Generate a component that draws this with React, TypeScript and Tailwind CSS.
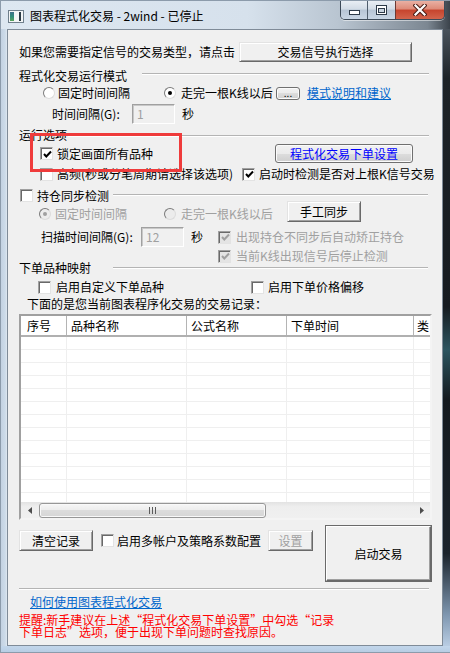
import React from "react";

type CProps = { checked?: boolean; disabled?: boolean; className?: string };

function Check({ checked = false, disabled = false, className = "" }: CProps) {
  return (
    <span
      className={`relative flex items-center justify-center w-[13px] h-[13px] shrink-0 border border-t-[#a0a0a0] border-l-[#a0a0a0] border-b-[#e3e3e3] border-r-[#e3e3e3] shadow-[inset_1px_1px_0_#696969] ${
        disabled ? "bg-[#e4e4e4]" : "bg-white"
      } ${className}`}
    >
      {checked && (
        <svg width="9" height="9" viewBox="0 0 9 9" className="ml-px mt-px">
          <polyline
            points="1,4 3.3,6.5 8,1.5"
            fill="none"
            stroke={disabled ? "#a0a0a0" : "#000"}
            strokeWidth="2"
          />
        </svg>
      )}
    </span>
  );
}

function Radio({ checked = false, disabled = false, className = "" }: CProps) {
  return (
    <span
      className={`flex items-center justify-center w-[12px] h-[12px] shrink-0 rounded-full border border-t-[#7a7a7a] border-l-[#7a7a7a] border-b-[#dcdcdc] border-r-[#dcdcdc] ${
        disabled ? "bg-[#ececec]" : "bg-white"
      } ${className}`}
    >
      {checked && (
        <span className={`w-[4px] h-[4px] rounded-full ${disabled ? "bg-[#a0a0a0]" : "bg-black"}`} />
      )}
    </span>
  );
}

function CButton({
  children,
  className = "",
  disabled = false,
}: {
  children: React.ReactNode;
  className?: string;
  disabled?: boolean;
}) {
  return (
    <div
      className={`flex items-center justify-center shrink-0 bg-[#f0f0f0] border border-t-[#e3e3e3] border-l-[#e3e3e3] border-b-[#696969] border-r-[#696969] shadow-[inset_1px_1px_0_#ffffff,inset_-1px_-1px_0_#a0a0a0] ${
        disabled ? "text-[#a0a0a0]" : "text-black"
      } ${className}`}
    >
      {children}
    </div>
  );
}

function AeroButton({ children, className = "" }: { children: React.ReactNode; className?: string }) {
  return (
    <div
      className={`flex items-center justify-center shrink-0 rounded-[3px] border border-[#707070] bg-[linear-gradient(180deg,#f2f2f2_0%,#ebebeb_50%,#dddddd_50%,#cfcfcf_100%)] shadow-[inset_0_0_0_1px_#fbfbfb] ${className}`}
    >
      {children}
    </div>
  );
}

function Input({ children, className = "" }: { children: React.ReactNode; className?: string }) {
  return (
    <div
      className={`flex items-center shrink-0 pl-[4px] bg-[#f0f0f0] text-[#a0a0a0] border border-t-[#a0a0a0] border-l-[#a0a0a0] border-b-white border-r-white shadow-[inset_1px_1px_0_#c8c8c8] ${className}`}
    >
      {children}
    </div>
  );
}

function Etch({ className = "" }: { className?: string }) {
  return <div className={`h-[2px] shrink-0 self-start border-t border-t-[#b4b4b4] border-b border-b-white ${className}`} />;
}

const cellCls = [
  "w-[46px] pl-[6px]",
  "w-[120px] pl-[4px]",
  "w-[100px] pl-[4px]",
  "w-[127px] pl-[4px]",
  "w-[30px] pl-[3px]",
];
const headers = ["序号", "品种名称", "公式名称", "下单时间", "类"];

function Table() {
  const rows = Array.from({ length: 13 });
  return (
    <div className="ml-[11px] mt-[4px] w-[413px] h-[206px] flex flex-col shrink-0 bg-white border-2 border-t-[#a0a0a0] border-l-[#a0a0a0] border-b-[#f4f4f4] border-r-[#f4f4f4] overflow-hidden">
      <div className="h-[21px] flex shrink-0 border-b-2 border-b-[#b0b0b0]">
        {headers.map((h, i) => (
          <div
            key={i}
            className={`${cellCls[i]} shrink-0 flex items-center overflow-hidden border-r border-r-[#b4b4b4]`}
          >
            {h}
          </div>
        ))}
      </div>
      <div className="flex-1 overflow-hidden flex flex-col">
        {rows.map((_, r) => (
          <div key={r} className="h-[13px] shrink-0 flex border-b border-b-[#efefef]">
            {cellCls.map((c, i) => (
              <div key={i} className={`${c} shrink-0 border-r border-r-[#efefef]`} />
            ))}
          </div>
        ))}
      </div>
      <div className="h-[16px] shrink-0 flex items-center bg-[linear-gradient(180deg,#e2e2e2_0%,#eeeeee_30%,#f0f0f0_100%)]">
        <div className="w-[17px] h-[16px] flex items-center justify-center">
          <svg width="4" height="7" viewBox="0 0 4 7">
            <polygon points="4,0 0,3.5 4,7" fill="#4d4d4d" />
          </svg>
        </div>
        <div className="ml-px w-[227px] h-[15px] rounded-[3px] border border-[#979797] bg-[linear-gradient(180deg,#f6f6f6_0%,#ececec_50%,#dcdcdc_50%,#d6d6d6_100%)] shadow-[inset_0_0_0_1px_#f9f9f9] flex items-center justify-center">
          <svg width="7" height="7" viewBox="0 0 7 7">
            <rect x="0" y="0" width="1" height="7" fill="#5c5c5c" />
            <rect x="3" y="0" width="1" height="7" fill="#5c5c5c" />
            <rect x="6" y="0" width="1" height="7" fill="#5c5c5c" />
          </svg>
        </div>
        <div className="ml-auto w-[17px] h-[16px] flex items-center justify-center">
          <svg width="4" height="7" viewBox="0 0 4 7">
            <polygon points="0,0 4,3.5 0,7" fill="#4d4d4d" />
          </svg>
        </div>
      </div>
    </div>
  );
}

function TitleIcon() {
  return (
    <svg width="16" height="13" viewBox="0 0 16 13">
      <defs>
        <linearGradient id="ig" x1="0" y1="0" x2="0" y2="1">
          <stop offset="0" stopColor="#3f6f8a" />
          <stop offset="0.5" stopColor="#2f8c7a" />
          <stop offset="1" stopColor="#5aa35c" />
        </linearGradient>
      </defs>
      <rect x="0.5" y="0.5" width="15" height="12" fill="#f3f5f6" stroke="#6f7f8c" />
      <rect x="2" y="2" width="4" height="9" fill="url(#ig)" />
      <rect x="11" y="2" width="2" height="9" fill="#2c3b44" />
    </svg>
  );
}

function CaptionButtons() {
  return (
    <div className="mr-[5px] ml-auto flex h-[19px] rounded-b-[5px] border border-t-0 border-[#3d4a58] overflow-hidden shadow-[0_1px_0_rgba(255,255,255,0.5)]">
      <div className="w-[27px] h-full flex items-end justify-center pb-[4px] border-r border-r-[#4f5d6c] bg-[linear-gradient(180deg,#e9eef4_0%,#d3dce6_45%,#b7c5d5_50%,#c9d6e4_100%)]">
        <svg width="11" height="5" viewBox="0 0 11 5">
          <rect x="0.5" y="0.5" width="10" height="4" fill="#fff" stroke="#2e3b49" />
        </svg>
      </div>
      <div className="w-[28px] h-full flex items-center justify-center border-r border-r-[#6b3a34] bg-[linear-gradient(180deg,#e9eef4_0%,#d3dce6_45%,#b7c5d5_50%,#c9d6e4_100%)]">
        <svg width="11" height="10" viewBox="0 0 11 10">
          <rect x="0.5" y="0.5" width="10" height="9" fill="#fff" stroke="#2e3b49" />
          <rect x="2.5" y="3.5" width="6" height="4" fill="#c9d4df" stroke="#2e3b49" />
        </svg>
      </div>
      <div className="w-[48px] h-full flex items-center justify-center bg-[linear-gradient(180deg,#eab0a3_0%,#de8a78_45%,#c6442d_50%,#d2644c_100%)]">
        <svg width="14" height="12" viewBox="0 0 14 12">
          <path d="M2.5 1.5 L11.5 10.5 M11.5 1.5 L2.5 10.5" stroke="#4b1d16" strokeWidth="4.2" strokeLinecap="square" />
          <path d="M2.5 1.5 L11.5 10.5 M11.5 1.5 L2.5 10.5" stroke="#ffffff" strokeWidth="2.2" strokeLinecap="square" />
        </svg>
      </div>
    </div>
  );
}

export default function App() {
  const gray = "text-[#a0a0a0]";
  return (
    <div className="relative w-[450px] h-[653px] overflow-hidden flex flex-col font-['Noto_Sans_CJK_SC','Noto_Sans',sans-serif] text-[12px] leading-[12px] text-black whitespace-nowrap bg-[linear-gradient(180deg,#d9e4f0_0%,#c9d9ea_50%,#c0d4e9_100%)]">
      {/* title bar */}
      <div className="h-[29px] shrink-0 flex items-start border-t border-l border-[#8c9bab] bg-[linear-gradient(90deg,#dde7f1_0%,#d6e1ec_55%,#b9c5d1_75%,#7c8792_95%,#3b434b_100%)]">
        <div className="ml-[7px] mt-[9px]">
          <TitleIcon />
        </div>
        <span className="ml-[6px] mt-[8px] leading-[14px]">图表程式化交易 - 2wind - 已停止</span>
        <CaptionButtons />
      </div>

      <div className="h-[617px] flex shrink-0">
        <div className="w-[7px] shrink-0 border-l border-[#8c9bab] bg-[linear-gradient(90deg,#c3d2e2_0%,#cddbe9_70%,#dfe8f1_100%)]" />
        {/* client area */}
        <div className="w-[436px] h-[617px] shrink-0 flex flex-col border border-[#7f8b98] bg-[#f0f0f0]">
          {/* A */}
          <div className="mt-[12px] h-[20px] flex items-center pl-[11px]">
            <span className="w-[220px]">如果您需要指定信号的交易类型，请点击</span>
            <CButton className="w-[173px] h-[20px]">交易信号执行选择</CButton>
          </div>
          {/* B */}
          <div className="mt-[7px] h-[14px] flex items-center pl-[11px]">
            <span className="w-[108px]">程式化交易运行模式</span>
            <Etch className="ml-[15px] w-[287px] mt-[4px]" />
          </div>
          {/* C */}
          <div className="mt-[3px] h-[14px] flex items-center">
            <div className="ml-[35px] w-[121px] flex items-center">
              <Radio />
              <span className="ml-[3px]">固定时间间隔</span>
            </div>
            <div className="w-[112px] flex items-center">
              <Radio checked />
              <span className="ml-[5px]">走完一根K线以后</span>
            </div>
            <AeroButton className="w-[24px] h-[13px] text-[10px] leading-[10px]">...</AeroButton>
            <span className="ml-[7px] text-[#0066cc] underline">模式说明和建议</span>
          </div>
          {/* D */}
          <div className="mt-[4px] h-[20px] flex items-center">
            <span className="ml-[44px] w-[80px]">时间间隔(G):</span>
            <Input className="w-[43px] h-[20px]">1</Input>
            <span className="ml-[7px]">秒</span>
          </div>
          {/* E */}
          <div className="mt-[4px] h-[14px] flex items-center pl-[11px]">
            <span className="w-[48px]">运行选项</span>
            <Etch className="ml-[1px] w-[361px] mt-[7px]" />
          </div>
          {/* F */}
          <div className="mt-[2px] h-[19px] flex items-center">
            <div className="ml-[32px] w-[235px] flex items-center">
              <Check checked />
              <span className="ml-[4px]">锁定画面所有品种</span>
            </div>
            <AeroButton className="w-[138px] h-[19px] text-[#0000ff]">程式化交易下单设置</AeroButton>
          </div>
          {/* G */}
          <div className="mt-[4px] h-[14px] flex items-center">
            <div className="ml-[32px] w-[202px] flex items-center">
              <Check />
              <span className="ml-[4px]">高频(秒或分笔周期请选择该选项)</span>
            </div>
            <Check checked />
            <span className="ml-[4px]">启动时检测是否对上根K信号交易</span>
          </div>
          {/* H */}
          <div className="mt-[8px] h-[13px] flex items-center">
            <div className="ml-[12px] flex items-center">
              <Check />
              <span className="ml-[4px] w-[76px]">持仓同步检测</span>
            </div>
            <Etch className="w-[315px] mt-[5px]" />
          </div>
          {/* I */}
          <div className="-mt-px h-[21px] flex items-center">
            <div className="ml-[31px] w-[125px] mt-[5px] flex items-center">
              <Radio checked disabled />
              <span className={`ml-[4px] ${gray}`}>固定时间间隔</span>
            </div>
            <div className="w-[123px] mt-[5px] flex items-center">
              <Radio disabled />
              <span className={`ml-[5px] ${gray}`}>走完一根K线以后</span>
            </div>
            <CButton className="w-[74px] h-[21px]">手工同步</CButton>
          </div>
          {/* J */}
          <div className="mt-[5px] h-[20px] flex items-center">
            <span className="ml-[33px] w-[100px]">扫描时间间隔(G):</span>
            <Input className="w-[43px] h-[20px]">12</Input>
            <span className="ml-[7px]">秒</span>
            <Check checked disabled className="ml-[15px]" />
            <span className={`ml-[5px] ${gray}`}>出现持仓不同步后自动矫正持仓</span>
          </div>
          {/* K */}
          <div className="mt-[3px] h-[12px] flex items-center">
            <Check checked disabled className="ml-[210px]" />
            <span className={`ml-[5px] ${gray}`}>当前K线出现信号后停止检测</span>
          </div>
          {/* L */}
          <div className="h-[12px] flex items-center pl-[11px]">
            <span className="w-[72px]">下单品种映射</span>
            <Etch className="ml-[22px] w-[315px] mt-[5px]" />
          </div>
          {/* M */}
          <div className="mt-[7px] h-[12px] flex items-center">
            <div className="ml-[30px] w-[213px] flex items-center">
              <Check />
              <span className="ml-[5px]">启用自定义下单品种</span>
            </div>
            <Check />
            <span className="ml-[4px]">启用下单价格偏移</span>
          </div>
          {/* N */}
          <div className="mt-[5px] h-[12px] flex items-center pl-[19px]">
            <span>下面的是您当前图表程序化交易的交易记录：</span>
          </div>
          <Table />
          {/* bottom controls */}
          <div className="mt-[5px] h-[57px] flex items-start shrink-0">
            <div className="mt-[5px] ml-[11px] h-[21px] flex items-center">
              <CButton className="w-[74px] h-[21px]">清空记录</CButton>
              <Check className="ml-[8px]" />
              <span className="ml-[3px] w-[151px]">启用多帐户及策略系数配置</span>
              <CButton disabled className="w-[45px] h-[21px]">
                设置
              </CButton>
            </div>
            <div className="ml-[12px] w-[107px] h-[57px] flex shrink-0 border border-[#6a6a6a]">
              <div className="flex-1 flex items-center justify-center bg-[#f0f0f0] border border-t-white border-l-white border-b-[#696969] border-r-[#696969] shadow-[inset_-1px_-1px_0_#a0a0a0]">
                启动交易
              </div>
            </div>
          </div>
          <Etch className="ml-[11px] mt-[6px] w-[410px]" />
          <div className="mt-[6px] h-[12px] flex items-center pl-[22px]">
            <span className="text-[#0066cc] underline">如何使用图表程式化交易</span>
          </div>
          <div className="mt-[6px] pl-[11px] text-[#ff0000] flex flex-col">
            <div className="h-[12px] flex items-center">提醒:新手建议在上述“程式化交易下单设置”中勾选“记录</div>
            <div className="h-[12px] flex items-center">下单日志”选项，便于出现下单问题时查找原因。</div>
          </div>
        </div>
        <div className="w-[7px] shrink-0 bg-[linear-gradient(180deg,#4a535c_0%,#1d2328_8%,#161b20_45%,#2d5560_52%,#141a1f_60%,#1b232b_85%,#7f97b0_95%,#b9cde3_100%)]" />
      </div>
      <div className="h-[7px] shrink-0 border-l border-b border-[#8c9bab] bg-[linear-gradient(180deg,#c2d6eb_0%,#b8cde4_100%)]" />

      {/* red annotation box */}
      <div className="absolute left-[30px] top-[133px] w-[152px] h-[39px] border-[3px] border-[#ef3b3b]" />
    </div>
  );
}
